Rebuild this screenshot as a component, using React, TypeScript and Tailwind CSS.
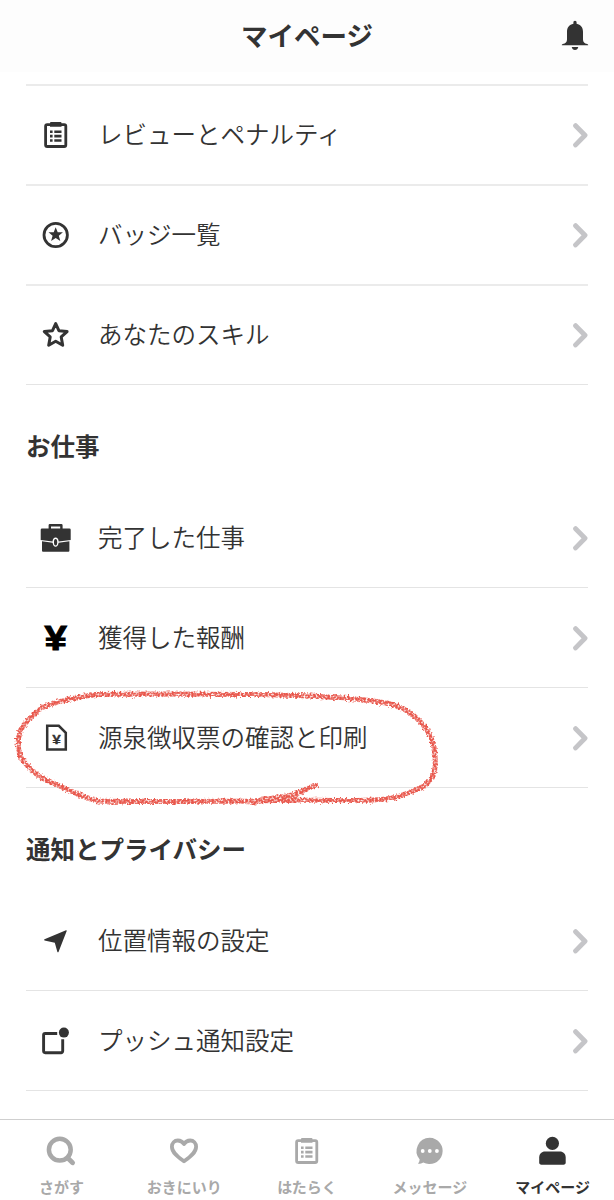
import type { ReactNode } from "react";

type TMenuItem = {
  label: string;
  icon: ReactNode;
};

type TTab = {
  label: string;
  icon: ReactNode;
  active?: boolean;
};

const ClipboardIcon = () => (
  <svg viewBox="0 0 40 40" className="w-10 h-10" fill="none">
    <rect x="9.6" y="9.6" width="20.2" height="21.9" rx="1.6" stroke="currentColor" strokeWidth="2.8" />
    <path
      d="M15 7h9.5a1 1 0 0 1 1 1v3.8H14V8a1 1 0 0 1 1-1zM14 15.4h2.6V18H14zM18.3 15.4h7.2V18h-7.2zM14 19.8h2.6v2.6H14zM18.3 19.8h7.2v2.6h-7.2zM14 24.2h2.6v2.6H14zM18.3 24.2h7.2v2.6h-7.2z"
      fill="currentColor"
    />
  </svg>
);

const BadgeIcon = () => (
  <svg viewBox="0 0 40 40" className="w-10 h-10" fill="none">
    <circle cx="19.7" cy="20" r="11.7" stroke="currentColor" strokeWidth="2.8" />
    <path
      d="M19.7 12.3l2 5h5.2l-4.1 3.4 1.5 5.3-4.6-3-4.6 3 1.5-5.3-4.1-3.4h5.2z"
      fill="currentColor"
    />
  </svg>
);

const StarIcon = () => (
  <svg viewBox="0 0 40 40" className="w-10 h-10" fill="none">
    <path
      d="M19.7 8.6l3.2 7.1 8.2.9-5.9 5.3 1.5 8.3-7-4-7 4 1.5-8.3-5.9-5.3 8.2-.9z"
      stroke="currentColor"
      strokeWidth="3"
      strokeLinejoin="round"
    />
  </svg>
);

const BriefcaseIcon = () => (
  <svg viewBox="0 0 40 40" className="w-10 h-10" fill="none">
    <path d="M13.8 11V7.2h11.6V11" stroke="currentColor" strokeWidth="2.4" strokeLinejoin="round" />
    <path
      d="M6 10.4h27.4a1.3 1.3 0 0 1 1.3 1.3v10.4l-12 1.4c-.3-2.5-1.4-3.9-3.1-3.9s-2.8 1.4-3.1 3.9l-11.8-1.4V11.7A1.3 1.3 0 0 1 6 10.4z"
      fill="currentColor"
    />
    <path
      d="M6 23.3l10.6 1.5c.4 2.7 1.5 4 3 4s2.6-1.3 3-4L33.4 23.3v9.5a1 1 0 0 1-1 1H7a1 1 0 0 1-1-1z"
      fill="currentColor"
    />
    <ellipse cx="19.6" cy="24.2" rx="1.6" ry="3.3" fill="currentColor" />
  </svg>
);

const YenIcon = () => (
  <svg viewBox="0 0 40 40" className="w-10 h-10 text-black">
    <text
      x="8.6"
      y="32"
      textLength="22.4"
      lengthAdjust="spacingAndGlyphs"
      className="font-['Liberation_Sans',sans-serif] font-bold text-[35px]"
      fill="currentColor"
      stroke="currentColor"
      strokeWidth="1"
    >
      ¥
    </text>
  </svg>
);

const TaxSlipIcon = () => (
  <svg viewBox="0 0 40 40" className="w-10 h-10" fill="none">
    <path d="M11.2 7.8h11.6l7 7v16.6H11.2z" stroke="currentColor" strokeWidth="2.5" />
    <text
      x="16.2"
      y="26.2"
      textLength="8.6"
      lengthAdjust="spacingAndGlyphs"
      className="font-['Liberation_Sans',sans-serif] font-bold text-[13px]"
      fill="currentColor"
      stroke="currentColor"
      strokeWidth="0.3"
    >
      ¥
    </text>
  </svg>
);

const LocationIcon = () => (
  <svg viewBox="0 0 40 40" className="w-10 h-10">
    <path
      d="M30 9.2c.5-.2.9.2.7.7l-8.2 21c-.2.5-.9.5-1.1 0l-2.6-9.2-10.3-2.3c-.5-.2-.5-.9 0-1.1z"
      fill="currentColor"
    />
  </svg>
);

const PushIcon = () => (
  <svg viewBox="0 0 40 40" className="w-10 h-10" fill="none">
    <path
      d="M21.2 12.5H9.2a1.6 1.6 0 0 0-1.6 1.6v16a1.6 1.6 0 0 0 1.6 1.6h15.900a1.6 1.6 0 0 0 1.6-1.6V18.2"
      stroke="currentColor"
      strokeWidth="2.9"
    />
    <circle cx="27.9" cy="11.6" r="5" fill="currentColor" />
  </svg>
);

const BellIcon = () => (
  <svg viewBox="0 0 28 32" className="w-7 h-8 text-[#333333]">
    <path
      d="M14 .8c1 0 1.6.7 1.6 1.7v1.3c4.1.8 6.4 3.7 6.4 7.9v7.7c0 2.6 1.5 4 4.2 4.6.7.2 1 .5 1 1.2H.8c0-.7.3-1 1-1.2C4.5 23.4 6 22 6 19.4v-7.7c0-4.2 2.3-7.1 6.4-7.9V2.5C12.4 1.5 13 .8 14 .8zM10.7 27h6.6c-.4 1.9-1.6 3-3.3 3s-2.9-1.1-3.3-3z"
      fill="currentColor"
    />
  </svg>
);

const Chevron = () => (
  <svg viewBox="0 0 16 26" className="w-4 h-[26px] text-[#c5c5c8]" fill="none">
    <path
      d="M3.6 3.7l9.4 9.6-9.4 9.6"
      stroke="currentColor"
      strokeWidth="4.9"
      strokeLinecap="round"
      strokeLinejoin="round"
    />
  </svg>
);

const SearchIcon = () => (
  <svg viewBox="0 0 40 40" className="w-10 h-10" fill="none" stroke="currentColor">
    <circle cx="18.8" cy="18.7" r="10.9" strokeWidth="4.5" />
    <path d="M27 27.3l4.600 4.500" strokeWidth="4.8" strokeLinecap="round" />
  </svg>
);

const HeartIcon = () => (
  <svg viewBox="0 0 40 40" className="w-10 h-10" fill="none">
    <path
      d="M20 30.3c-5-3.6-12.1-8.2-12.1-14.6 0-3.5 2.6-6.2 5.9-6.2 2.7 0 4.9 1.4 6.2 3.6 1.3-2.2 3.5-3.6 6.2-3.6 3.3 0 5.9 2.7 5.9 6.2 0 6.4-7.1 11-12.1 14.6z"
      stroke="currentColor"
      strokeWidth="3.8"
      strokeLinejoin="round"
    />
  </svg>
);

const MessageIcon = () => (
  <svg viewBox="0 0 40 40" className="w-10 h-10">
    <path
      d="M19.7 6.8a13.1 13.1 0 1 1-6.4 24.6c-1.6 1-3.3 1.4-5.3 1.3 1-1.4 1.6-2.8 1.7-4.3A13.1 13.1 0 0 1 19.7 6.8z"
      fill="currentColor"
    />
    <circle cx="12.7" cy="20" r="1.9" fill="#fff" />
    <circle cx="19.8" cy="20" r="1.9" fill="#fff" />
    <circle cx="26.9" cy="20" r="1.9" fill="#fff" />
  </svg>
);

const PersonIcon = () => (
  <svg viewBox="0 0 40 40" className="w-10 h-10" fill="currentColor">
    <circle cx="19.4" cy="12.4" r="6.6" />
    <path d="M12.1 20.5h14.7c3.5 0 5.9 2.5 5.9 5.9v5.1c0 1.4-.8 2.2-2.2 2.2H8.4c-1.4 0-2.2-.8-2.2-2.2v-5.1c0-3.4 2.4-5.9 5.9-5.9z" />
  </svg>
);

const profileItems: TMenuItem[] = [
  { label: "レビューとペナルティ", icon: <ClipboardIcon /> },
  { label: "バッジ一覧", icon: <BadgeIcon /> },
  { label: "あなたのスキル", icon: <StarIcon /> },
];

const workItems: TMenuItem[] = [
  { label: "完了した仕事", icon: <BriefcaseIcon /> },
  { label: "獲得した報酬", icon: <YenIcon /> },
  { label: "源泉徴収票の確認と印刷", icon: <TaxSlipIcon /> },
];

const privacyItems: TMenuItem[] = [
  { label: "位置情報の設定", icon: <LocationIcon /> },
  { label: "プッシュ通知設定", icon: <PushIcon /> },
];

const tabs: TTab[] = [
  { label: "さがす", icon: <SearchIcon /> },
  { label: "おきにいり", icon: <HeartIcon /> },
  { label: "はたらく", icon: <ClipboardIcon /> },
  { label: "メッセージ", icon: <MessageIcon /> },
  { label: "マイページ", icon: <PersonIcon />, active: true },
];

const MenuList = ({
  items,
  rowClassName = "h-[100px] border-b border-[#e4e4e4]",
}: {
  items: TMenuItem[];
  rowClassName?: string;
}) => (
  <ul>
    {items.map(({ label, icon }) => (
      <li key={label} className={`flex items-center pl-2.5 ${rowClassName}`}>
        {icon}
        <span className="flex-1 pl-[22px] pb-0.5 text-[24.5px] leading-9 font-[350] whitespace-nowrap">
          {label}
        </span>
        <Chevron />
      </li>
    ))}
  </ul>
);

const SectionTitle = ({ children }: { children: ReactNode }) => (
  <h2 className="h-[103px] pt-[43px] text-[24.5px] leading-9 font-bold">
    {children}
  </h2>
);

// Crayon-like loop around the tax slip row
const CrayonCircle = () => (
  <svg
    viewBox="0 0 440 130"
    className="absolute left-0 top-[680px] w-[440px] h-[130px] pointer-events-none"
    fill="none"
  >
    <filter
      id="crayon"
      x="0"
      y="0"
      width="440"
      height="130"
      filterUnits="userSpaceOnUse"
      colorInterpolationFilters="sRGB"
    >
      <feTurbulence type="fractalNoise" baseFrequency="0.5" numOctaves="3" seed="4" result="noise" />
      <feDisplacementMap
        in="SourceGraphic"
        in2="noise"
        scale="6"
        xChannelSelector="R"
        yChannelSelector="G"
        result="rough"
      />
      <feColorMatrix
        in="noise"
        type="matrix"
        values="0 0 0 0 0  0 0 0 0 0  0 0 0 0 0  0 0 0 3 -0.65"
        result="grain"
      />
      <feComposite in="rough" in2="grain" operator="in" result="chalk" />
      <feGaussianBlur in="chalk" stdDeviation="0.55" />
    </filter>
    <g filter="url(#crayon)" stroke="#e8574c" strokeLinecap="round" strokeLinejoin="round">
      <path
        d="M256 121C230 121 130 122 98 121C85 119 65 108 42 98C32 91 21 81 19 72C17 60 19 52 23 46C29 39 37 31 43 27C56 22 76 17 96 14.500C130 13.500 210 14 260 14.500C310 15.500 350 17.500 380 22C404 25.500 416 35 427 50C435 62 436 75 435 88C433 104 420 109 405 114C390 121 365 120.500 340 120.500C312 120.500 285 119.500 256 121"
        strokeWidth="5"
      />
      <path d="M255 123C267 117 281 118 292 115C302 113 309 107 316 105" strokeWidth="5" />
      <path d="M257 121C269 117 281 119 295 117" strokeWidth="4.5" />
    </g>
  </svg>
);

export default function App() {
  return (
    <div className="relative flex flex-col w-[614px] h-[1200px] overflow-hidden bg-white text-[#333333] font-['Noto_Sans_CJK_JP',sans-serif]">
      <header className="grid grid-cols-[1fr_auto_1fr] items-center h-[72px] shrink-0 px-[25px] bg-[#fdfdfd]">
        <h1 className="col-start-2 pb-[3px] text-[26.5px] leading-9 font-bold">マイページ</h1>
        <div className="justify-self-end">
          <BellIcon />
        </div>
      </header>
      <main className="flex-1 min-h-0 px-[26px] pt-3 overflow-hidden">
        <div className="border-t-2 border-[#ebebeb]">
          <MenuList
            items={profileItems}
            rowClassName="h-[100px] border-b-2 border-[#ebebeb] last:h-[99px] last:border-b last:border-[#e4e4e4]"
          />
        </div>
        <SectionTitle>お仕事</SectionTitle>
        <MenuList items={workItems} />
        <SectionTitle>通知とプライバシー</SectionTitle>
        <MenuList items={privacyItems} />
      </main>
      <nav className="grid grid-cols-5 h-[81px] shrink-0 border-t border-[#cfcfcf] bg-white">
        {tabs.map(({ label, icon, active }) => (
          <div
            key={label}
            className={`flex flex-col items-center pt-[11px] ${
              active ? "text-[#333333]" : "text-[#a9a9a9]"
            }`}
          >
            {icon}
            <span className="mt-1 text-[15px] leading-6 font-bold whitespace-nowrap">
              {label}
            </span>
          </div>
        ))}
      </nav>
      <CrayonCircle />
    </div>
  );
}
